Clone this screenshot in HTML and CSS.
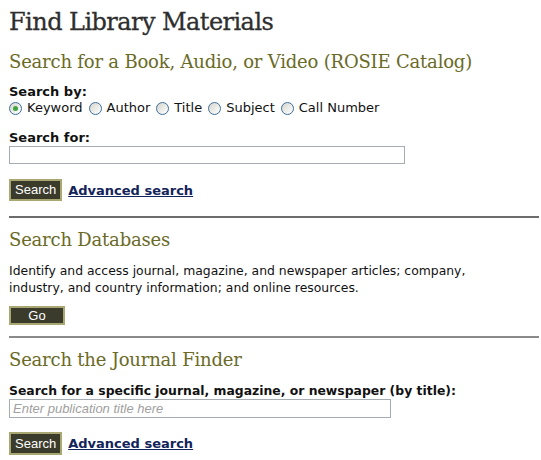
FILE: index.html
```html
<!DOCTYPE html>
<html>
<head>
<meta charset="utf-8">
<link rel="stylesheet" href="styles.css">
</head>
<body>
<div class="page">
  <h1 class="title">Find Library Materials</h1>
  <section class="sec">
    <h2 class="head">Search for a Book, Audio, or Video (ROSIE Catalog)</h2>
    <div class="label">Search by:</div>
    <div class="radios">
      <label class="opt"><span class="radio on"></span>Keyword</label>
      <label class="opt"><span class="radio"></span>Author</label>
      <label class="opt"><span class="radio"></span>Title</label>
      <label class="opt"><span class="radio"></span>Subject</label>
      <label class="opt"><span class="radio"></span>Call Number</label>
    </div>
    <div class="label lab2">Search for:</div>
    <div class="field f1"></div>
    <div class="actions">
      <span class="btn">Search</span>
      <a class="adv" href="#">Advanced search</a>
    </div>
  </section>
  <hr class="rule">
  <section class="sec">
    <h2 class="head h-after">Search Databases</h2>
    <p class="desc">Identify and access journal, magazine, and newspaper articles; company, industry, and country information; and online resources.</p>
    <span class="btn go">Go</span>
  </section>
  <hr class="rule r2">
  <section class="sec">
    <h2 class="head h-after">Search the Journal Finder</h2>
    <div class="label lab3">Search for a specific journal, magazine, or newspaper (by title):</div>
    <div class="field f2"><span class="ph">Enter publication title here</span></div>
    <div class="actions a2">
      <span class="btn">Search</span>
      <a class="adv" href="#">Advanced search</a>
    </div>
  </section>
</div>
</body>
</html>
```
FILE: styles.css
```css
html, body { margin: 0; padding: 0; background: #fff; }
.page {
  padding: 6px 2px 0 9px;
  font-family: "DejaVu Sans", Verdana, sans-serif;
  font-size: 13px;
  color: #111;
}
.title {
  font-family: "DejaVu Serif", Georgia, serif;
  font-weight: normal;
  font-size: 24px;
  color: #2e2e2e;
  margin: 0;
  line-height: 32px;
  letter-spacing: -0.55px;
  -webkit-text-stroke: 0.3px #2e2e2e;
}
.head {
  font-family: "DejaVu Serif", Georgia, serif;
  font-weight: normal;
  font-size: 18px;
  color: #6b6a27;
  margin: 12px 0 0 0;
  line-height: 24px;
  letter-spacing: -0.2px;
}
.h-after { margin-top: 10px; }
.sec { display: flex; flex-direction: column; align-items: flex-start; }
.label { font-weight: bold; margin-top: 10px; line-height: 15px; }
.lab2 { margin-top: 14px; }
.lab3 { margin-top: 11px; font-size: 12.4px; }
.radios { display: flex; align-items: center; line-height: 16px; margin-top: 1px; }
.opt { display: flex; align-items: center; margin-right: 6px; }
.radio {
  width: 11px; height: 11px;
  border: 1px solid #3d6e9c;
  border-radius: 50%;
  background: linear-gradient(135deg, #d6d6ce, #fff);
  margin-right: 5px;
  position: relative;
  box-sizing: content-box;
}
.radio.on::after {
  content: "";
  position: absolute;
  left: 3px; top: 3px;
  width: 5px; height: 5px;
  border-radius: 50%;
  background: #3fa33f;
}
.field {
  width: 394px; height: 16px;
  border: 1px solid #a5acb2;
  margin-top: 1px;
}
.f2 { width: 380px; height: 17px; display: flex; align-items: center; }
.ph {
  font-family: "Liberation Sans", Arial, sans-serif;
  font-style: italic;
  color: #a0a0a0;
  font-size: 13px;
  padding-left: 3px;
}
.actions { display: flex; align-items: center; margin-top: 15px; }
.btn {
  display: inline-block;
  background: #3b3b2c;
  color: #fff;
  border: 2px solid #a9a873;
  font-family: "Liberation Sans", Arial, sans-serif;
  font-size: 13px;
  line-height: 18px;
  padding: 0 4px;
}
.adv {
  margin-left: 6px;
  font-weight: bold;
  color: #13245a;
  text-decoration: underline;
}
.rule {
  border: 0;
  border-top: 2px solid #6c6c6c;
  margin: 15px 0 0 0;
  width: 530px;
}
.r2 { border-top-color: #8a8a8a; margin-top: 11px; }
.desc { margin: 10px 0 0 0; line-height: 17px; width: 510px; font-size: 12.4px; }
.go {
  margin-top: 10px;
  width: 44px;
  text-align: center;
  line-height: 13px;
  padding: 1px 4px;
}
.a2 { margin-top: 14px; }
.a2 .btn { line-height: 19px; }
```
